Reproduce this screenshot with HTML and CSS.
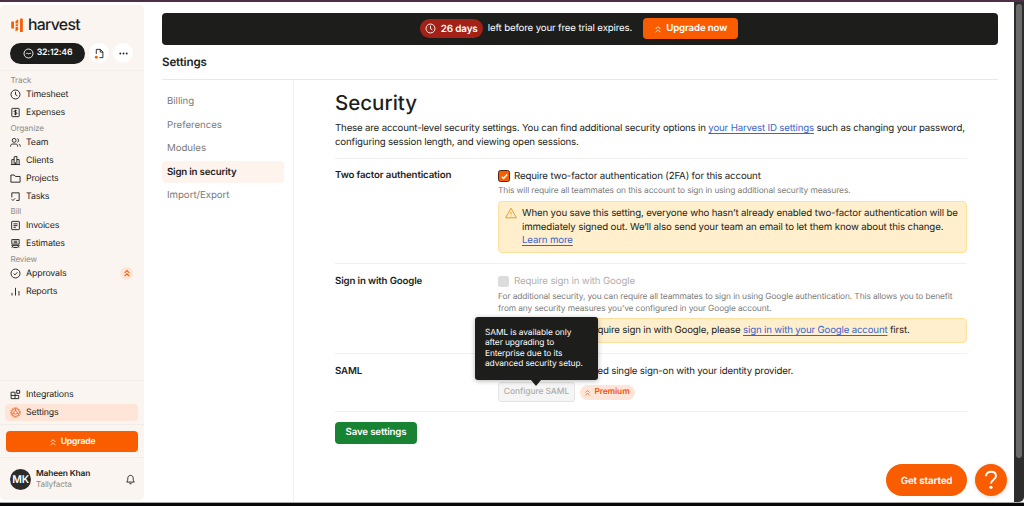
FILE: index.html
```html
<!DOCTYPE html>
<html lang="en">
<head>
    <meta charset="UTF-8">
    <meta name="viewport" content="width=device-width, initial-scale=1.0">
    <title>Sign in security - Harvest</title>
    <link rel="stylesheet" href="styles.css">
</head>
<body>
    <!-- Shared icons -->
    <svg class="defs" width="0" height="0">
        <symbol id="chevrons" viewBox="0 0 10 10"><path d="M2 5l3-3 3 3M2 9l3-3 3 3"/></symbol>
        <symbol id="clock" viewBox="0 0 12 12"><circle cx="6" cy="6" r="4.9"/><path d="M6 3v3.2l2 1.2"/></symbol>
    </svg>

    <div class="window">
        <aside class="sidebar">
            <div class="logo">
                <svg class="logo-mark" viewBox="0 0 13 15">
                    <rect x="0.2" y="3.6" width="2.9" height="7.4" rx="0.6"/>
                    <path d="M4.700 3l2.800-1.800v4.600H4.700zM4.700 9h2.800v3.200L4.700 14z"/>
                    <rect x="4.7" y="6.5" width="2.8" height="1.7" rx="0.5"/>
                    <rect x="9.4" y="0.5" width="2.9" height="14" rx="0.6"/>
                </svg>
                <span>harvest</span>
            </div>

            <div class="timer-row">
                <button class="timer">
                    <svg class="icon" viewBox="0 0 12 12"><circle cx="6" cy="6" r="4.9"/><path d="M3.2 6.400c.6-.8 1.200-.8 1.900-.4s1.300.4 1.900 0 1.200-.4 1.800.1"/></svg>
                    32:12:46
                </button>
                <button class="round">
                    <svg class="icon" viewBox="0 0 12 12"><path d="M2.500 6.500V1.500h4.500l2.700 2.700v6.300H6M6.800 1.600v2.900h2.800"/><circle class="dot" cx="2.5" cy="10" r="1.6"/></svg>
                </button>
                <button class="round">
                    <svg class="icon more" viewBox="0 0 12 12"><circle cx="2.5" cy="6" r="1"/><circle cx="6" cy="6" r="1"/><circle cx="9.5" cy="6" r="1"/></svg>
                </button>
            </div>

            <nav class="nav">
                <h4>Track</h4>
                <a><svg class="icon"><use href="#clock"/></svg>Timesheet</a>
                <a><svg class="icon" viewBox="0 0 12 12"><rect x="2" y="1.5" width="8" height="9" rx="0.6"/><path d="M7.700 4.400c-.5-.8-3.300-.8-3.300.4 0 1.300 3.300.8 3.300 2.200 0 1.200-2.900 1.200-3.400.3M6 3v6"/></svg>Expenses</a>
                <h4>Organize</h4>
                <a><svg class="icon" viewBox="0 0 12 12"><circle cx="4.5" cy="3.7" r="2.1"/><path d="M.7 10.500V9.700c0-1.300.8-2 2-2h3.600c1.200 0 2 .7 2 2v.8M8 1.800c1.900.3 1.900 3.400 0 3.800M9.600 7.800c1.200.3 1.700 1 1.700 2.700"/></svg>Team</a>
                <a><svg class="icon" viewBox="0 0 12 12"><path d="M1 10.400h10M2 10.400V5h2.500M4.500 10.400V2l3-.5v8.900M7.500 5H10v5.400M6 8v2.400"/></svg>Clients</a>
                <a><svg class="icon" viewBox="0 0 12 12"><path d="M1 10V2.200h3.700l1.200 1.600H11V10z"/></svg>Projects</a>
                <a><svg class="icon" viewBox="0 0 12 12"><path d="M2 7V2h8v8.300H6.800M1.800 9l1.400 1.400L5.600 8"/></svg>Tasks</a>
                <h4>Bill</h4>
                <a><svg class="icon" viewBox="0 0 12 12"><rect x="1.8" y="1.5" width="8.4" height="9" rx="0.6"/><path d="M3.800 4.200h4.400M3.800 6.100h4.400M3.800 8h2.600"/></svg>Invoices</a>
                <a><svg class="icon" viewBox="0 0 12 12"><path d="M2 1.700h8v5H2zM4 3.500h4M4 5.200h4M1.500 8.300h9M3.600 8.300L2 10.600M8.400 8.300L10 10.600M3.600 10.400h4.800"/></svg>Estimates</a>
                <h4>Review</h4>
                <a><svg class="icon" viewBox="0 0 12 12"><circle cx="6" cy="6" r="4.9"/><path d="M4 6.200l1.400 1.300L8 4.700"/></svg>Approvals<span class="up-badge"><svg class="icon"><use href="#chevrons"/></svg></span></a>
                <a><svg class="icon" viewBox="0 0 12 12"><path d="M2.200 10.400V7.500M6 10.400V2M9.800 10.400V5.500"/></svg>Reports</a>
            </nav>

            <div class="side-bottom">
                <a><svg class="icon" viewBox="0 0 12 12"><path d="M1.200 3.500h4.300v7H1.200zM1.200 7h8.300v3.500h-4"/><path d="M7.300 1.500h3.200v3.200H7.300z"/></svg>Integrations</a>
                <a class="active"><svg class="icon" viewBox="0 0 12 12"><circle class="teeth" cx="6" cy="6" r="5.2"/><circle cx="6" cy="6" r="4.3"/><circle cx="6" cy="6" r="1.8"/><path d="M6 4.300V2M7.600 6.700l2 1M4.400 6.700l-2 1"/></svg>Settings</a>
            </div>
            <div class="upgrade-row">
                <button class="upgrade"><svg class="icon"><use href="#chevrons"/></svg>Upgrade</button>
            </div>
            <div class="user">
                <span class="avatar">MK</span>
                <div class="who">
                    <strong>Maheen Khan</strong>
                    <span>Tallyfacta</span>
                </div>
                <svg class="icon bell" viewBox="0 0 12 12"><path d="M1.800 8.800c1-1 1.200-2 1.200-3.600C3 3 4 1.500 6 1.500S9 3 9 5.200c0 1.600.2 2.600 1.200 3.600zM4.800 10.600h2.400"/></svg>
            </div>
        </aside>

        <main class="main">
            <div class="banner">
                <span class="days"><svg class="icon"><use href="#clock"/></svg>26 days</span>
                <span class="left">left before your free trial expires.</span>
                <button class="upgrade-now"><svg class="icon"><use href="#chevrons"/></svg>Upgrade now</button>
            </div>
            <h2 class="page-title">Settings</h2>

            <div class="columns">
                <nav class="subnav">
                    <a>Billing</a>
                    <a>Preferences</a>
                    <a>Modules</a>
                    <a class="active">Sign in security</a>
                    <a>Import/Export</a>
                </nav>

                <div class="content">
                    <h1>Security</h1>
                    <p class="intro">These are account-level security settings. You can find additional security options in <a class="link">your Harvest ID settings</a> such as changing your password,<br>configuring session length, and viewing open sessions.</p>

                    <section class="row two-factor">
                        <h3>Two factor authentication</h3>
                        <div class="field">
                            <label><span class="check on"><svg class="icon" viewBox="0 0 10 10"><path d="M2 5.300l2 2 4-4.500"/></svg></span>Require two-factor authentication (2FA) for this account</label>
                            <p class="help">This will require all teammates on this account to sign in using additional security measures.</p>
                            <div class="notice">
                                <svg class="icon warn" viewBox="0 0 12 12"><path d="M6 1.200L11.400 10.800H.6zM6 4.600v3M6 8.600v.8"/></svg>
                                <p>When you save this setting, everyone who hasn’t already enabled two-factor authentication will be<br>immediately signed out. We’ll also send your team an email to let them know about this change.<br><a class="link">Learn more</a></p>
                            </div>
                        </div>
                    </section>

                    <section class="row google">
                        <h3>Sign in with Google</h3>
                        <div class="field">
                            <label class="disabled"><span class="check"></span>Require sign in with Google</label>
                            <p class="help">For additional security, you can require all teammates to sign in using Google authentication. This allows you to benefit<br>from any security measures you’ve configured in your Google account.</p>
                            <div class="notice">
                                <p class="tail">quire sign in with Google, please <a class="link">sign in with your Google account</a> first.</p>
                            </div>
                        </div>
                    </section>

                    <section class="row saml">
                        <h3>SAML</h3>
                        <div class="field">
                            <p class="saml-text">ed single sign-on with your identity provider.</p>
                            <div class="saml-actions">
                                <div class="configure-wrap">
                                    <button class="configure">Configure SAML</button>
                                    <div class="tooltip">SAML is available only<br>after upgrading to<br>Enterprise due to its<br>advanced security setup.</div>
                                </div>
                                <span class="premium"><svg class="icon"><use href="#chevrons"/></svg>Premium</span>
                            </div>
                        </div>
                    </section>

                    <button class="save">Save settings</button>
                </div>
            </div>
        </main>

        <div class="scrollbar"><div class="thumb"></div></div>

        <div class="floating">
            <button class="get-started">Get started</button>
            <button class="help-button"><svg class="icon" viewBox="0 0 16 20"><path d="M3 6.300C3 3.500 5 1.800 8 1.800s5 1.700 5 4.300c0 3.600-5 3.600-5 7.400"/><circle class="dot" cx="8" cy="17.3" r="1.6"/></svg></button>
        </div>
    </div>
</body>
</html>
```
FILE: styles.css
```css
:root {
    --orange: #fa5d00;
    --ink: #1d1e1c;
    --gray: #7b7b7a;
    --cream: #faf5f0;
    --peach: #ffe5d8;
    --line: #f0f0ef;
}

* {
    margin: 0;
    padding: 0;
    box-sizing: border-box;
}

body {
    font-family: Inter, "Liberation Sans", sans-serif;
    font-size: 9.7px;
    letter-spacing: -0.15px;
    color: var(--ink);
    background: #080808;
    overflow: hidden;
    white-space: nowrap;
    text-rendering: geometricPrecision;
}

button {
    font-family: inherit;
    letter-spacing: inherit;
    text-rendering: inherit;
    border: none;
    display: flex;
    align-items: center;
    justify-content: center;
}

.defs {
    position: absolute;
}

.icon {
    flex: none;
    width: 11px;
    height: 11px;
    fill: none;
    stroke: currentColor;
    stroke-width: 1;
}

.window {
    display: flex;
    height: 503px;
    border-top: 2px solid #4d3048;
    border-bottom: 1px solid #aaa;
    background: white;
}

/* Sidebar */
.sidebar {
    width: 144px;
    height: 495px;
    margin-top: 3px;
    background: var(--cream);
    border-radius: 5px;
    display: flex;
    flex-direction: column;
    font-size: 8.8px;
}

.logo {
    display: flex;
    align-items: center;
    height: 18px;
    margin: 11px 0 0 11px;
    font-size: 15.8px;
    font-weight: 500;
    letter-spacing: -0.7px;
    line-height: 16px;
}

.logo-mark {
    width: 12.5px;
    height: 14.5px;
    margin-right: 4.5px;
    fill: var(--orange);
}

.timer-row {
    display: flex;
    align-items: center;
    gap: 4px;
    height: 37px;
    padding: 2px 0 0 10px;
    margin-bottom: 3.4px;
    border-bottom: 1px solid #f3eeea;
}

.timer {
    width: 75px;
    height: 21px;
    gap: 3px;
    border-radius: 11px;
    background: var(--ink);
    color: white;
    font-size: 8.7px;
    font-weight: 600;
}

.timer .icon {
    width: 11px;
    height: 11px;
}

.round {
    width: 20px;
    height: 20px;
    border-radius: 50%;
    background: white;
    color: var(--ink);
}

.dot {
    fill: var(--orange);
    stroke: none;
}

.more {
    fill: currentColor;
    stroke: none;
}

.nav h4 {
    height: 11.5px;
    padding-left: 10.5px;
    font-size: 8.1px;
    font-weight: 400;
    line-height: 13px;
    color: #8e8b87;
}

.nav a,
.side-bottom a {
    display: flex;
    align-items: center;
    height: 18px;
    padding-left: 10px;
    gap: 5px;
}

.up-badge {
    display: flex;
    align-items: center;
    justify-content: center;
    width: 13px;
    height: 13px;
    margin-left: auto;
    margin-right: 11px;
    border-radius: 50%;
    background: var(--peach);
    color: var(--orange);
}

.up-badge .icon {
    width: 8px;
    height: 8px;
    stroke-width: 1.3;
}

.side-bottom {
    margin-top: auto;
    padding: 4.5px 5px 3.5px;
    border-top: 1px solid #f1ece7;
}

.side-bottom a {
    padding-left: 5px;
}

.side-bottom a.active {
    width: 133px;
    height: 17px;
    border-radius: 4px;
    background: var(--peach);
}

.active .icon {
    color: #f0672a;
}

.teeth {
    stroke-dasharray: 1.5 1;
}

.upgrade-row {
    padding: 6px 6px 5px;
    border-top: 1px solid #f1ece7;
    border-bottom: 1px solid #f1ece7;
}

.upgrade {
    width: 132px;
    height: 21px;
    gap: 4px;
    border-radius: 4px;
    background: var(--orange);
    color: white;
    font-size: 8.6px;
    font-weight: 600;
}

.upgrade .icon,
.upgrade-now .icon {
    width: 8px;
    height: 8px;
}

.user {
    display: flex;
    align-items: center;
    height: 42px;
    padding-left: 10px;
}

.avatar {
    width: 21px;
    height: 21px;
    border-radius: 50%;
    background: #2c2d2b;
    color: white;
    font-size: 10.5px;
    font-weight: 600;
    line-height: 21px;
    text-align: center;
    letter-spacing: -0.4px;
}

.who {
    display: flex;
    flex-direction: column;
    margin-left: 5px;
    padding-top: 1.5px;
    font-size: 8.1px;
    line-height: 9.5px;
}

.who strong {
    font-size: 8.4px;
    font-weight: 600;
}

.who span {
    color: #8e8b87;
}

.bell {
    margin-left: auto;
    margin-right: 8px;
}

/* Main column */
.main {
    width: 836px;
    margin-left: 18px;
    display: flex;
    flex-direction: column;
}

.banner {
    display: flex;
    align-items: center;
    justify-content: center;
    height: 32px;
    margin-top: 10.5px;
    padding-right: 2px;
    border-radius: 4px;
    background: var(--ink);
    color: white;
}

.days {
    display: flex;
    align-items: center;
    height: 19px;
    width: 63px;
    padding-left: 5px;
    gap: 5px;
    border-radius: 10px;
    background: #a42117;
    font-size: 9.9px;
    font-weight: 600;
}

.left {
    margin: 0 11px 0 5px;
}

.upgrade-now {
    width: 95px;
    height: 21px;
    gap: 4px;
    border-radius: 4px;
    background: var(--orange);
    color: white;
    font-size: 9.7px;
    font-weight: 600;
}

.page-title {
    height: 35px;
    font-size: 11.6px;
    font-weight: 600;
    line-height: 34.5px;
    border-bottom: 1px solid #e8e8e8;
}

.columns {
    display: flex;
    flex: 1;
}

.subnav {
    width: 132px;
    padding-top: 10.5px;
    border-right: 1px solid var(--line);
    letter-spacing: -0.05px;
}

.subnav a {
    display: block;
    width: 122px;
    height: 22px;
    margin-bottom: 1.6px;
    padding-left: 5px;
    line-height: 23.5px;
    color: var(--gray);
}

.subnav a.active {
    border-radius: 4px;
    background: #fff3ee;
    color: var(--ink);
    font-weight: 600;
    letter-spacing: -0.2px;
}

.content {
    width: 632px;
    margin-left: 41px;
}

.content h1 {
    margin-top: 10.5px;
    font-size: 20.5px;
    font-weight: 500;
    line-height: 26px;
    letter-spacing: 0;
}

.intro {
    margin: 6px 0 8.5px;
    line-height: 13.5px;
    letter-spacing: -0.178px;
}

.link {
    color: #3b66cb;
    text-decoration: underline;
    text-underline-offset: 2px;
}

.row {
    display: flex;
    border-top: 1px solid var(--line);
    padding-top: 10.5px;
}

.row h3 {
    width: 163px;
    font-size: 9.7px;
    font-weight: 600;
    line-height: 14.5px;
}

.field {
    width: 469px;
}

.two-factor {
    height: 105.5px;
}

.google {
    height: 90px;
}

.saml {
    height: 58.5px;
    border-bottom: 1px solid var(--line);
}

label {
    display: flex;
    align-items: center;
    height: 14px;
}

.disabled {
    color: #b0b0b0;
}

.check {
    display: flex;
    align-items: center;
    justify-content: center;
    width: 11px;
    height: 11px;
    margin-right: 5px;
    border-radius: 2.5px;
    background: #dcdcdc;
}

.check.on {
    width: 12px;
    height: 12px;
    margin-right: 4px;
    border: 1px solid #4d2a18;
    background: var(--orange);
    color: white;
}

.check .icon {
    width: 9px;
    height: 9px;
    stroke-width: 1.6;
}

.help {
    margin-top: 2px;
    font-size: 8.4px;
    line-height: 12px;
    letter-spacing: -0.115px;
    color: var(--gray);
}

.notice {
    display: flex;
    padding: 5px 6px;
    margin-top: 4px;
    height: 52px;
    border: 1px solid #ffdf9e;
    border-radius: 4px;
    background: #ffefcd;
    line-height: 13.5px;
}

.google .notice {
    height: 25px;
    margin-top: 3.5px;
}

.warn {
    width: 12px;
    height: 12px;
    margin-right: 5px;
    color: #e0a030;
}

.notice .tail {
    margin-left: 92.5px;
    letter-spacing: -0.18px;
}

.saml-text {
    padding-left: 99.5px;
    line-height: 14px;
    letter-spacing: -0.18px;
}

.saml-actions {
    display: flex;
    align-items: center;
    margin-top: 3.5px;
}

.configure-wrap {
    position: relative;
}

.configure {
    width: 77px;
    height: 20px;
    border: 1px solid #e4e4e4;
    border-radius: 3px;
    background: #f5f5f5;
    color: #aeaeae;
    font-size: 8.5px;
    font-weight: 500;
    letter-spacing: -0.1px;
}

.tooltip {
    position: absolute;
    left: -23px;
    bottom: 22px;
    width: 123px;
    height: 63px;
    padding: 10.5px 10px;
    border-radius: 3px;
    background: var(--ink);
    color: white;
    font-size: 8.4px;
    line-height: 10.5px;
    letter-spacing: -0.1px;
    box-shadow: 0 1px 5px rgba(0, 0, 0, 0.3);
}

.tooltip::after {
    content: "";
    position: absolute;
    left: 56px;
    top: 100%;
    border: 5px solid transparent;
    border-top: 6px solid var(--ink);
    border-bottom: none;
}

.premium {
    display: flex;
    align-items: center;
    justify-content: center;
    width: 55px;
    height: 15px;
    margin-left: 5px;
    padding-right: 1px;
    gap: 3px;
    border-radius: 8px;
    background: var(--peach);
    color: #f0560f;
    font-size: 8.4px;
    font-weight: 600;
    letter-spacing: -0.1px;
}

.premium .icon {
    width: 7px;
    height: 7px;
}

.save {
    width: 82px;
    height: 22px;
    margin-top: 10px;
    border-radius: 4px;
    background: #188433;
    color: white;
    font-size: 9.7px;
    font-weight: 600;
}

/* Browser scrollbar and the floating buttons */
.scrollbar {
    width: 10px;
    margin-left: auto;
    padding: 2px;
    background: #2d2d2d;
    border-bottom-right-radius: 5px;
}

.thumb {
    width: 6px;
    height: 454px;
    border-radius: 3px;
    background: #6b6b6b;
}

.floating {
    position: absolute;
    right: 17px;
    top: 464px;
    display: flex;
    gap: 8px;
}

.get-started {
    width: 81px;
    height: 32px;
    padding-top: 1px;
    border-radius: 16px;
    background: var(--orange);
    color: white;
    font-size: 9.9px;
    font-weight: 600;
}

.help-button {
    width: 32px;
    height: 32px;
    border-radius: 50%;
    background: var(--orange);
    color: white;
    box-shadow: 0 1px 4px rgba(0, 0, 0, 0.15);
}

.help-button .icon {
    width: 16px;
    height: 20px;
    stroke-width: 2;
}

.help-button .dot {
    fill: white;
}
```
